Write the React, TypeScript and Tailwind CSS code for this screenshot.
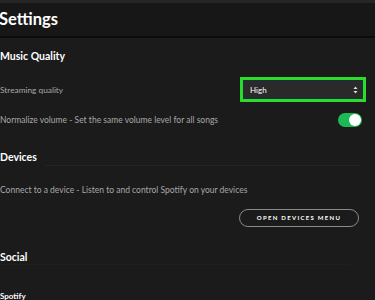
import { useState } from "react";

function Toggle({ on }: { on: boolean }) {
  return (
    <div className={on ? "w-[24px] h-[14px] rounded-full bg-[#1db954] flex items-center justify-end px-[1px]" : "w-[24px] h-[14px] rounded-full bg-[#535353] flex items-center justify-start px-[1px]"}>
      <div className="w-[12px] h-[12px] rounded-full bg-white" />
    </div>
  );
}

function App() {
  const [normalize] = useState(true);

  return (
    <div className="w-[375px] h-[300px] overflow-hidden bg-[#1b1b1b] text-white" style={{ fontFamily: "Lato, 'Noto Sans', sans-serif" }}>
      <div className="h-[3px] bg-[#262626]" />
      <div className="h-[33px] bg-[#171717] flex items-center">
        <h1 className="text-[16.5px] font-bold leading-none -ml-[1px]">Settings</h1>
      </div>
      <div className="h-[2px] bg-[#0b0b0b]" />

      <h2 className="mt-[11px] text-[10.5px] font-bold leading-[14px]">Music Quality</h2>

      <div className="mt-[14px] h-[25px] flex items-center justify-between pr-[9px]">
        <span className="text-[8.3px] text-[#a8a8a8] leading-[12px]">Streaming quality</span>
        <div className="w-[126px] h-[25px] border-[3px] border-[#2bdc2b] bg-[#1a3040] p-[1px]">
          <div className="h-full bg-[#2a2a2a] flex items-center justify-between pl-[6px] pr-[4px]">
            <span className="text-[8px] leading-none">High</span>
            <svg width="5" height="8" viewBox="0 0 5 8" fill="#e0e0e0">
              <path d="M2.5 0.5 L4.5 3 H0.5 Z" />
              <path d="M2.5 7.5 L4.5 5 H0.5 Z" />
            </svg>
          </div>
        </div>
      </div>

      <div className="mt-[11px] h-[14px] flex items-center justify-between pr-[13px]">
        <span className="text-[8.5px] text-[#a8a8a8] leading-[12px]">Normalize volume - Set the same volume level for all songs</span>
        <Toggle on={normalize} />
      </div>

      <h2 className="mt-[23px] text-[10.5px] font-bold leading-[14px]">Devices</h2>
      <div className="mt-[1px] ml-[45px] mr-[15px] h-px bg-[#242424]" />

      <p className="mt-[18px] text-[8.5px] text-[#a8a8a8] leading-[12px]">Connect to a device - Listen to and control Spotify on your devices</p>

      <div className="mt-[13px] flex justify-end pr-[16px]">
        <button className="w-[120px] h-[18px] rounded-full border border-[#8a8a8a] text-[6px] font-bold tracking-[1.3px] leading-none flex items-center justify-center" type="button">
          OPEN DEVICES MENU
        </button>
      </div>

      <h2 className="mt-[23px] text-[10.5px] font-bold leading-[14px]">Social</h2>
      <div className="mr-[25px] h-px bg-[#202020]" />

      <h3 className="mt-[25px] text-[8px] font-bold leading-[12px]">Spotify</h3>
    </div>
  );
}

export default App;
